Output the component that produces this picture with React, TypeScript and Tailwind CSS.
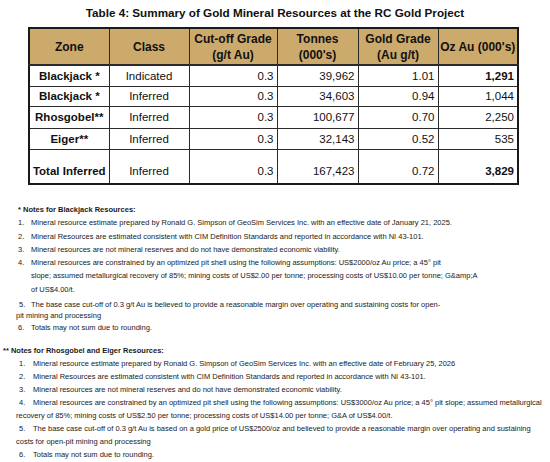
const rows = [
  { zone: "Blackjack *", cls: "Indicated", cut: "0.3", tonnes: "39,962", grade: "1.01", oz: "1,291", strong: true },
  { zone: "Blackjack *", cls: "Inferred", cut: "0.3", tonnes: "34,603", grade: "0.94", oz: "1,044", strong: false },
  { zone: "Rhosgobel**", cls: "Inferred", cut: "0.3", tonnes: "100,677", grade: "0.70", oz: "2,250", strong: false },
  { zone: "Eiger**", cls: "Inferred", cut: "0.3", tonnes: "32,143", grade: "0.52", oz: "535", strong: false },
];

const rowHeights = ["h-[21px]", "h-[20px]", "h-[22px]", "h-[21px]"];

function Th({ children }: { children: React.ReactNode }) {
  return (
    <th className="border border-b-2 border-[#2a2a2a] text-center align-middle font-bold text-[12px] leading-[16px] text-[#111] px-0 whitespace-nowrap">
      {children}
    </th>
  );
}

export default function App() {
  return (
    <div className="w-[550px] h-[462px] bg-white text-[#111] overflow-hidden" style={{ fontFamily: '"Liberation Sans", Arial, sans-serif' }}>
      <h1 className="text-center font-bold text-[11.7px] leading-[14px] pt-[6px] text-[#111]">
        Table 4: Summary of Gold Mineral Resources at the RC Gold Project
      </h1>

      <table className="ml-[28px] mt-[7px] w-[489px] table-fixed border-collapse border-2 border-[#1a1a1a]">
        <colgroup>
          <col className="w-[80px]" />
          <col className="w-[80px]" />
          <col className="w-[88px]" />
          <col className="w-[81px]" />
          <col className="w-[80px]" />
          <col className="w-[80px]" />
        </colgroup>
        <thead>
          <tr className="h-[37px] bg-[#cbaa6c]">
            <Th>Zone</Th>
            <Th>Class</Th>
            <Th>Cut-off Grade<br />(g/t Au)</Th>
            <Th>Tonnes<br />(000's)</Th>
            <Th>Gold Grade<br />(Au g/t)</Th>
            <Th>Oz Au (000's)</Th>
          </tr>
        </thead>
        <tbody className="text-[11.5px] leading-[14px]">
          {rows.map((r, i) => (
            <tr key={i} className={rowHeights[i]}>
              <td className="border border-[#2a2a2a] text-center font-bold p-0">{r.zone}</td>
              <td className="border border-[#2a2a2a] text-center p-0">{r.cls}</td>
              <td className="border border-[#2a2a2a] text-right pr-[3px] p-0">{r.cut}</td>
              <td className="border border-[#2a2a2a] text-right pr-[3px] p-0">{r.tonnes}</td>
              <td className="border border-[#2a2a2a] text-right pr-[3px] p-0">{r.grade}</td>
              <td className={`border border-[#2a2a2a] text-right pr-[3px] p-0 ${r.strong ? "font-bold" : ""}`}>{r.oz}</td>
            </tr>
          ))}
          <tr className="h-[35px]">
            <td className="border border-[#2a2a2a] text-center font-bold align-bottom pb-[5px]">Total Inferred</td>
            <td className="border border-[#2a2a2a] text-center align-bottom pb-[5px]">Inferred</td>
            <td className="border border-[#2a2a2a] text-right pr-[3px] align-bottom pb-[5px]">0.3</td>
            <td className="border border-[#2a2a2a] text-right pr-[3px] align-bottom pb-[5px]">167,423</td>
            <td className="border border-[#2a2a2a] text-right pr-[3px] align-bottom pb-[5px]">0.72</td>
            <td className="border border-[#2a2a2a] text-right pr-[3px] align-bottom pb-[5px] font-bold">3,829</td>
          </tr>
        </tbody>
      </table>

      {/* Blackjack notes */}
      <div className="text-[7.5px] leading-[13.3px] text-[#1a1a1a] mt-[18px]">
        <p className="font-bold pl-[18px]">* Notes for Blackjack Resources:</p>
        <div className="flex pl-[18px]"><span className="w-[13px] shrink-0">1.</span><span>Mineral resource estimate prepared by Ronald G. Simpson of GeoSim Services Inc. with an effective date of January 21, 2025.</span></div>
        <div className="flex pl-[18px]"><span className="w-[13px] shrink-0">2.</span><span>Mineral Resources are estimated consistent with CIM Definition Standards and reported in accordance with NI 43-101.</span></div>
        <div className="flex pl-[18px]"><span className="w-[13px] shrink-0">3.</span><span>Mineral resources are not mineral reserves and do not have demonstrated economic viability.</span></div>
        <div className="flex pl-[18px]">
          <span className="w-[13px] shrink-0">4.</span>
          <span>
            Mineral resources are constrained by an optimized pit shell using the following assumptions: US$2000/oz Au price; a 45° pit<br />
            slope; assumed metallurgical recovery of 85%; mining costs of US$2.00 per tonne; processing costs of US$10.00 per tonne; G&amp;amp;A<br />
            of US$4.00/t.
          </span>
        </div>
        <div className="pl-[16px] mt-[3px] leading-[11px]">
          <span className="inline-block pl-[3px] w-[15px]">5.</span>The base case cut-off of 0.3 g/t Au is believed to provide a reasonable margin over operating and sustaining costs for open-<br />
          pit mining and processing
        </div>
        <div className="flex pl-[18px] leading-[14px]"><span className="w-[13px] shrink-0">6.</span><span>Totals may not sum due to rounding.</span></div>
      </div>

      {/* Rhosgobel and Eiger notes */}
      <div className="text-[7.5px] leading-[13px] text-[#1a1a1a] mt-[9px]">
        <p className="font-bold pl-[3px]">** Notes for Rhosgobel and Eiger Resources:</p>
        <div className="flex pl-[19px]"><span className="w-[14px] shrink-0">1.</span><span>Mineral resource estimate prepared by Ronald G. Simpson of GeoSim Services Inc. with an effective date of February 25, 2026</span></div>
        <div className="flex pl-[19px]"><span className="w-[14px] shrink-0">2.</span><span>Mineral Resources are estimated consistent with CIM Definition Standards and reported in accordance with NI 43-101.</span></div>
        <div className="flex pl-[19px]"><span className="w-[14px] shrink-0">3.</span><span>Mineral resources are not mineral reserves and do not have demonstrated economic viability.</span></div>
        <div className="pl-[16px]">
          <span className="inline-block pl-[3px] w-[17px]">4.</span>Mineral resources are constrained by an optimized pit shell using the following assumptions: US$3000/oz Au price; a 45° pit slope; assumed metallurgical<br />
          recovery of 85%; mining costs of US$2.50 per tonne; processing costs of US$14.00 per tonne; G&amp;A of US$4.00/t.
        </div>
        <div className="pl-[16px]">
          <span className="inline-block pl-[3px] w-[17px]">5.</span>The base case cut-off of 0.3 g/t Au is based on a gold price of US$2500/oz and believed to provide a reasonable margin over operating and sustaining<br />
          costs for open-pit mining and processing
        </div>
        <div className="flex pl-[19px]"><span className="w-[14px] shrink-0">6.</span><span>Totals may not sum due to rounding.</span></div>
      </div>
    </div>
  );
}
